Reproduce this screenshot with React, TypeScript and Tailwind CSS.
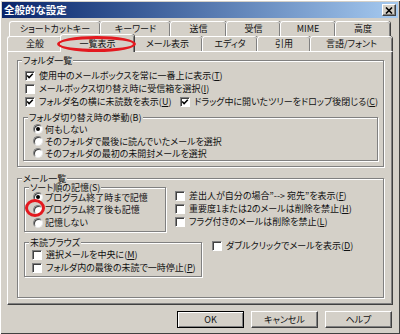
import React from "react";

function Check({ checked }: { checked?: boolean }) {
  return (
    <span className="relative inline-block w-[10px] h-[10px] shrink-0 bg-white border border-t-[#808080] border-l-[#808080] border-r-white border-b-white shadow-[inset_1px_1px_0_#404040]">
      {checked && (
        <svg viewBox="0 0 8 8" className="absolute left-0 top-0 w-[8px] h-[8px]">
          <path d="M1.2 3.6 L3.1 5.6 L6.8 1.8" stroke="#000" strokeWidth="1.5" fill="none" />
        </svg>
      )}
    </span>
  );
}

function Radio({ checked }: { checked?: boolean }) {
  return (
    <span className="inline-flex items-center justify-center w-[10px] h-[10px] shrink-0 rounded-full bg-white border border-t-[#808080] border-l-[#808080] border-r-[#e8e8e8] border-b-[#e8e8e8] shadow-[inset_1px_1px_0_#404040]">
      {checked && <span className="w-[4px] h-[4px] rounded-full bg-black" />}
    </span>
  );
}

function CheckRow({ checked, children, className = "" }: { checked?: boolean; children: React.ReactNode; className?: string }) {
  return (
    <div className={`flex items-center gap-[4px] h-[13px] ${className}`}>
      <Check checked={checked} />
      <span className="whitespace-nowrap leading-[11px]">{children}</span>
    </div>
  );
}

function RadioRow({ checked, children, className = "" }: { checked?: boolean; children: React.ReactNode; className?: string }) {
  return (
    <div className={`flex items-center gap-[2px] ${className}`}>
      <Radio checked={checked} />
      <span className="whitespace-nowrap leading-[11px]">{children}</span>
    </div>
  );
}

function Group({ label, className = "", children }: { label: string; className?: string; children: React.ReactNode }) {
  return (
    <div className={`relative border border-[#808080] shadow-[inset_1px_1px_0_#fff,1px_1px_0_#fff] ${className}`}>
      <span className="absolute -top-[5px] left-[4px] px-[1px] bg-[#d4d0c8] leading-[9px] whitespace-nowrap">{label}</span>
      {children}
    </div>
  );
}

function Tab({ label, className = "", selected }: { label: string; className?: string; selected?: boolean }) {
  if (selected) {
    return (
      <div className={`h-full ${className}`}>
        <div className="relative z-10 -mx-[2px] -mt-[2px] h-[18px] bg-[#d4d0c8] border-l border-t border-white rounded-t-[3px] shadow-[inset_-1px_0_0_#808080,1px_0_0_#404040] flex items-center justify-center whitespace-nowrap">
          {label}
        </div>
      </div>
    );
  }
  return (
    <div className={`h-full border-l border-t border-white rounded-t-[3px] shadow-[inset_-1px_0_0_#808080,1px_0_0_#404040] flex items-center justify-center whitespace-nowrap ${className}`}>
      {label}
    </div>
  );
}

export default function App() {
  return (
    <div className="relative w-[400px] h-[334px] bg-[#d4d0c8] p-[2px] shadow-[inset_1px_1px_0_#fff,inset_-1px_-1px_0_#404040] overflow-hidden font-['Noto_Sans_CJK_JP','Noto_Sans_CJK_SC',sans-serif] text-[9px] text-[#111] [font-feature-settings:'palt']">
      {/* Title bar */}
      <div className="h-[16px] flex items-center justify-between pl-[2px] pr-[2px] bg-linear-to-r from-[#0a246a] to-[#a6caf0]">
        <span className="text-white font-bold text-[10.5px] leading-[14px]">全般的な設定</span>
        <div className="w-[14px] h-[12px] bg-[#d4d0c8] border border-t-white border-l-white border-r-[#404040] border-b-[#404040] shadow-[inset_-1px_-1px_0_#808080] flex items-center justify-center">
          <svg viewBox="0 0 8 7" className="w-[8px] h-[7px]">
            <path d="M1 0.5 L7 6.5 M7 0.5 L1 6.5" stroke="#000" strokeWidth="1.6" />
          </svg>
        </div>
      </div>

      {/* Tabs and panel */}
      <div className="px-[5px] pt-[3px]">
        <div className="flex h-[15px] pl-[2px]">
          <Tab label="ショートカットキー" className="w-[91px]" />
          <Tab label="キーワード" className="w-[70px]" />
          <Tab label="送信" className="w-[56px]" />
          <Tab label="受信" className="w-[54px]" />
          <Tab label="MIME" className="w-[55px]" />
          <Tab label="高度" className="w-[55px]" />
        </div>
        <div className="flex h-[15px]">
          <Tab label="全般" className="w-[55px]" />
          <Tab label="一覧表示" className="w-[70px]" selected />
          <Tab label="メール表示" className="w-[70px]" />
          <Tab label="エディタ" className="w-[55px]" />
          <Tab label="引用" className="w-[53px]" />
          <Tab label="言語/フォント" className="w-[82px]" />
        </div>

        <div className="h-[254px] border-l border-t border-r border-b border-l-white border-t-white border-r-[#404040] border-b-[#404040] shadow-[inset_-1px_-1px_0_#808080] pl-[9px] pr-[8px] pt-[8px]">
          {/* フォルダ一覧 */}
          <Group label="フォルダ一覧" className="h-[107px] pt-[8px] pl-[5px] pr-[5px]">
            <div className="pl-[2px]">
              <CheckRow checked>
                使用中のメールボックスを常に一番上に表示(<u>T</u>)
              </CheckRow>
              <CheckRow>
                メールボックス切り替え時に受信箱を選択(<u>I</u>)
              </CheckRow>
              <div className="flex">
                <CheckRow checked className="w-[164px]">
                  フォルダ名の横に未読数を表示(<u>U</u>)
                </CheckRow>
                <CheckRow checked>
                  ドラッグ中に開いたツリーをドロップ後閉じる(<u>C</u>)
                </CheckRow>
              </div>
            </div>
            <Group label="フォルダ切り替え時の挙動(B)" className="mt-[9px] h-[44px] pt-[5px] pl-[9px]">
              <RadioRow checked className="h-[12px]">何もしない</RadioRow>
              <RadioRow className="h-[12px]">そのフォルダで最後に読んでいたメールを選択</RadioRow>
              <RadioRow className="h-[12px]">そのフォルダの最初の未開封メールを選択</RadioRow>
            </Group>
          </Group>

          {/* メール一覧 */}
          <Group label="メール一覧" className="mt-[11px] h-[120px] pt-[8px] pl-[6px]">
            <div className="flex gap-[9px]">
              <Group label="ソート順の記憶(S)" className="w-[142px] h-[45px] pt-[3px] pl-[8px]">
                <RadioRow checked className="h-[12px]">プログラム終了時まで記憶</RadioRow>
                <RadioRow className="h-[13px]">プログラム終了後も記憶</RadioRow>
                <RadioRow className="h-[13px]">記憶しない</RadioRow>
              </Group>
              <div className="pt-[2px]">
                <CheckRow>
                  {"差出人が自分の場合”--> 宛先”を表示("}
                  <u>F</u>)
                </CheckRow>
                <CheckRow>
                  重要度1または2のメールは削除を禁止(<u>H</u>)
                </CheckRow>
                <CheckRow>
                  フラグ付きのメールは削除を禁止(<u>L</u>)
                </CheckRow>
              </div>
            </div>
            <div className="flex items-start gap-[10px] mt-[10px]">
              <Group label="未読ブラウズ" className="w-[178px] h-[35px] pt-[5px] pl-[7px]">
                <CheckRow className="h-[12px]">
                  選択メールを中央に(<u>M</u>)
                </CheckRow>
                <CheckRow className="h-[12px]">
                  フォルダ内の最後の未読で一時停止(<u>P</u>)
                </CheckRow>
              </Group>
              <CheckRow className="-mt-[3px]">
                ダブルクリックでメールを表示(<u>D</u>)
              </CheckRow>
            </div>
          </Group>
        </div>
      </div>

      {/* Buttons */}
      <div className="flex justify-end gap-[7px] mt-[6px] pr-[6px]">
        <div className="w-[67px] h-[17px] border border-black shadow-[inset_1px_1px_0_#fff,inset_-1px_-1px_0_#808080] flex items-center justify-center">OK</div>
        <div className="w-[67px] h-[17px] border border-t-white border-l-white border-r-[#404040] border-b-[#404040] shadow-[inset_-1px_-1px_0_#808080] flex items-center justify-center">キャンセル</div>
        <div className="w-[67px] h-[17px] border border-t-white border-l-white border-r-[#404040] border-b-[#404040] shadow-[inset_-1px_-1px_0_#808080] flex items-center justify-center">ヘルプ</div>
      </div>

      {/* Red annotation marks */}
      <div className="absolute left-[57px] top-[36px] w-[79px] h-[16px] rounded-[50%] border-[3px] border-[#e3191f] z-20" />
      <div className="absolute left-[25px] top-[199px] w-[20px] h-[18px] rounded-[50%] border-[3px] border-[#e3191f] z-20" />
    </div>
  );
}
